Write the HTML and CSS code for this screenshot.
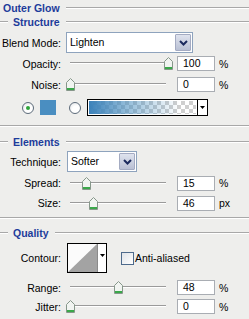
FILE: index.html
```html
<!DOCTYPE html>
<html>
<head>
<meta charset="utf-8">
<link rel="stylesheet" href="styles.css">
</head>
<body>
<div class="panel">
  <div class="title"><span class="title-text">Outer Glow</span><i class="rule"></i></div>

  <div class="legend"><i class="stub"></i><span class="legend-text">Structure</span><i class="rule"></i></div>

  <div class="row row-select">
    <span class="lbl">Blend Mode:</span>
    <div class="select select-blend">
      <span class="select-val">Lighten</span>
      <span class="select-btn"><svg width="9" height="6" viewBox="0 0 9 6"><polyline points="1,1 4.5,4.5 8,1" fill="none" stroke="#1b2a5e" stroke-width="2"/></svg></span>
    </div>
  </div>

  <div class="row row-slider">
    <span class="lbl">Opacity:</span>
    <div class="slider"><i class="track"></i><svg class="thumb" style="left:98px" width="9" height="13" viewBox="0 0 9 13"><path d="M0.5 4.5 L4.5 0.5 L8.5 4.5 V12.5 H0.5 Z" fill="#f1f4f1" stroke="#86978a"/><path d="M1 11 H8" stroke="#3aa84a" stroke-width="2"/></svg></div>
    <span class="num">100</span><span class="unit">%</span>
  </div>

  <div class="row row-slider">
    <span class="lbl">Noise:</span>
    <div class="slider"><i class="track"></i><svg class="thumb" style="left:0px" width="9" height="13" viewBox="0 0 9 13"><path d="M0.5 4.5 L4.5 0.5 L8.5 4.5 V12.5 H0.5 Z" fill="#f1f4f1" stroke="#86978a"/><path d="M1 11 H8" stroke="#3aa84a" stroke-width="2"/></svg></div>
    <span class="num">0</span><span class="unit">%</span>
  </div>

  <div class="row row-color">
    <span class="radio on"><i class="dot"></i></span>
    <span class="swatch"></span>
    <span class="radio radio2"></span>
    <div class="gradient">
      <span class="grad-fill"></span>
      <span class="drop"><svg width="5" height="3" viewBox="0 0 5 3"><path d="M0 0 H5 L2.5 3 Z" fill="#000"/></svg></span>
    </div>
  </div>

  <i class="divider"></i>

  <div class="legend legend-gap"><i class="stub"></i><span class="legend-text">Elements</span><i class="rule"></i></div>

  <div class="row row-select row-tech">
    <span class="lbl">Technique:</span>
    <div class="select select-tech">
      <span class="select-val">Softer</span>
      <span class="select-btn"><svg width="9" height="6" viewBox="0 0 9 6"><polyline points="1,1 4.5,4.5 8,1" fill="none" stroke="#1b2a5e" stroke-width="2"/></svg></span>
    </div>
  </div>

  <div class="row row-slider row-spread">
    <span class="lbl">Spread:</span>
    <div class="slider"><i class="track"></i><svg class="thumb" style="left:16px" width="9" height="13" viewBox="0 0 9 13"><path d="M0.5 4.5 L4.5 0.5 L8.5 4.5 V12.5 H0.5 Z" fill="#f1f4f1" stroke="#86978a"/><path d="M1 11 H8" stroke="#3aa84a" stroke-width="2"/></svg></div>
    <span class="num">15</span><span class="unit">%</span>
  </div>

  <div class="row row-slider row-size">
    <span class="lbl">Size:</span>
    <div class="slider"><i class="track"></i><svg class="thumb" style="left:23px" width="9" height="13" viewBox="0 0 9 13"><path d="M0.5 4.5 L4.5 0.5 L8.5 4.5 V12.5 H0.5 Z" fill="#f1f4f1" stroke="#86978a"/><path d="M1 11 H8" stroke="#3aa84a" stroke-width="2"/></svg></div>
    <span class="num">46</span><span class="unit">px</span>
  </div>

  <i class="divider divider2"></i>

  <div class="legend legend-gap2"><i class="stub"></i><span class="legend-text">Quality</span><i class="rule"></i></div>

  <div class="row row-contour">
    <span class="lbl">Contour:</span>
    <div class="contour">
      <svg class="contour-prev" width="29" height="28" viewBox="0 0 29 28"><rect width="29" height="28" fill="#fbfbfb"/><path d="M0 28 L29 0 V28 Z" fill="#a3a3a3"/></svg>
      <span class="contour-drop"><svg width="5" height="3" viewBox="0 0 5 3"><path d="M0 0 H5 L2.5 3 Z" fill="#000"/></svg></span>
    </div>
    <span class="check"></span>
    <span class="check-lbl">Anti-aliased</span>
  </div>

  <div class="row row-slider row-range">
    <span class="lbl">Range:</span>
    <div class="slider"><i class="track"></i><svg class="thumb" style="left:48px" width="9" height="13" viewBox="0 0 9 13"><path d="M0.5 4.5 L4.5 0.5 L8.5 4.5 V12.5 H0.5 Z" fill="#f1f4f1" stroke="#86978a"/><path d="M1 11 H8" stroke="#3aa84a" stroke-width="2"/></svg></div>
    <span class="num">48</span><span class="unit">%</span>
  </div>

  <div class="row row-slider row-jitter">
    <span class="lbl">Jitter:</span>
    <div class="slider"><i class="track"></i><svg class="thumb" style="left:0px" width="9" height="13" viewBox="0 0 9 13"><path d="M0.5 4.5 L4.5 0.5 L8.5 4.5 V12.5 H0.5 Z" fill="#f1f4f1" stroke="#86978a"/><path d="M1 11 H8" stroke="#3aa84a" stroke-width="2"/></svg></div>
    <span class="num">0</span><span class="unit">%</span>
  </div>
</div>
</body>
</html>
```

FILE: styles.css
```css
* { box-sizing: border-box; }
html, body { margin: 0; padding: 0; }
body {
  background: #eeeeec;
  font-family: "Liberation Sans", Arial, sans-serif;
  font-size: 10.5px;
  color: #000;
  width: 249px;
  height: 319px;
  overflow: hidden;
}
.panel { display: flex; flex-direction: column; }

.title { display: flex; align-items: center; height: 16px; padding-left: 3px; }
.title-text, .legend-text { font-weight: bold; font-size: 10.5px; color: #1d3c9b; }
.title .rule { margin-left: 6px; }
.rule, .stub {
  display: block;
  height: 2px;
  border-top: 1px solid #a8a8a8;
  border-bottom: 1px solid #fff;
}
.rule { flex: 1; }
.stub { width: 8px; flex: none; }
.legend { display: flex; align-items: center; height: 12px; }
.legend-text { margin: 0 6px 0 5px; }
.legend-gap { margin-top: 9px; }
.legend-gap2 { margin-top: 8px; }

.divider {
  display: block;
  height: 2px;
  border-top: 1px solid #a8a8a8;
  border-bottom: 1px solid #fff;
  margin-top: 9px;
}
.divider2 { margin-top: 4px; }

.row { display: flex; align-items: center; }
.lbl { width: 61px; flex: none; text-align: right; }

.row-select { height: 21px; margin-top: 4px; }
.row-tech { margin-top: 3px; }
.select {
  display: flex;
  height: 21px;
  margin-left: 5px;
  background: #fff;
  border: 1px solid #8ea3bd;
}
.select-blend { width: 127px; }
.select-tech { width: 70px; margin-left: 6px; }
.select-val { flex: 1; padding-left: 3px; line-height: 19px; }
.select-btn {
  width: 16px;
  margin: 1px;
  display: flex;
  align-items: center;
  justify-content: center;
  background: linear-gradient(#dfe3ee, #b9c0d4);
  border: 1px solid #a4abc2;
  border-radius: 1px;
}

.row-slider { height: 21px; }
.row-spread { height: 20px; margin-top: 1px; }
.row-size { height: 20px; }
.row-range { height: 19px; margin-top: 5px; }
.row-jitter { height: 19px; }
.slider { position: relative; width: 106px; height: 13px; margin-left: 5px; flex: none; }
.track {
  position: absolute;
  left: 4px;
  right: 6px;
  top: 5px;
  height: 2px;
  border-top: 1px solid #9a9a9a;
  border-bottom: 1px solid #fff;
}
.thumb { position: absolute; top: 0; }
.num {
  width: 38px;
  height: 15px;
  margin-left: 5px;
  flex: none;
  background: #fff;
  border: 1px solid #a9adb3;
  padding-left: 5px;
  line-height: 13px;
}
.unit { margin-left: 4px; }

.row-color { height: 17px; margin-top: 4px; padding-left: 22px; }
.radio {
  width: 12px;
  height: 12px;
  flex: none;
  border-radius: 50%;
  border: 1px solid #5d6b7a;
  background: radial-gradient(circle at 60% 65%, #fff 40%, #dcdfe2 100%);
  display: flex;
  align-items: center;
  justify-content: center;
}
.dot { width: 4px; height: 4px; border-radius: 50%; background: #2ea43a; }
.swatch { width: 16px; height: 15px; margin-left: 6px; background: #4a8ec1; flex: none; }
.radio2 { margin-left: 13px; }
.gradient {
  display: flex;
  width: 121px;
  height: 17px;
  margin-left: 6px;
  border: 1px solid #000;
  background: #fff;
}
.grad-fill {
  flex: 1;
  border: 1px solid #fff;
  background:
    linear-gradient(to right, rgba(60, 130, 186, 1) 0%, rgba(74, 143, 192, 0.6) 35%, rgba(74, 143, 192, 0) 85%),
    repeating-conic-gradient(#cfcfcf 0 25%, #fff 0 50%) 0 0 / 8px 8px;
}
.drop {
  width: 10px;
  flex: none;
  border-left: 1px solid #000;
  display: flex;
  align-items: center;
  justify-content: center;
  background: #fff;
}

.row-contour { height: 30px; margin-top: 4px; }
.contour {
  display: flex;
  width: 40px;
  height: 30px;
  margin-left: 6px;
  border: 1px solid #000;
  background: #fff;
}
.contour-prev { display: block; flex: none; }
.contour-drop {
  flex: 1;
  display: flex;
  justify-content: center;
  padding-top: 10px;
  border-left: 1px solid #8a8a8a;
}
.contour-drop svg { display: block; }
.check {
  width: 13px;
  height: 13px;
  margin-left: 14px;
  flex: none;
  border: 1px solid #4d6a8c;
  background: linear-gradient(135deg, #dfe3e8, #fff);
}
.check-lbl { margin-left: 1px; }
```
